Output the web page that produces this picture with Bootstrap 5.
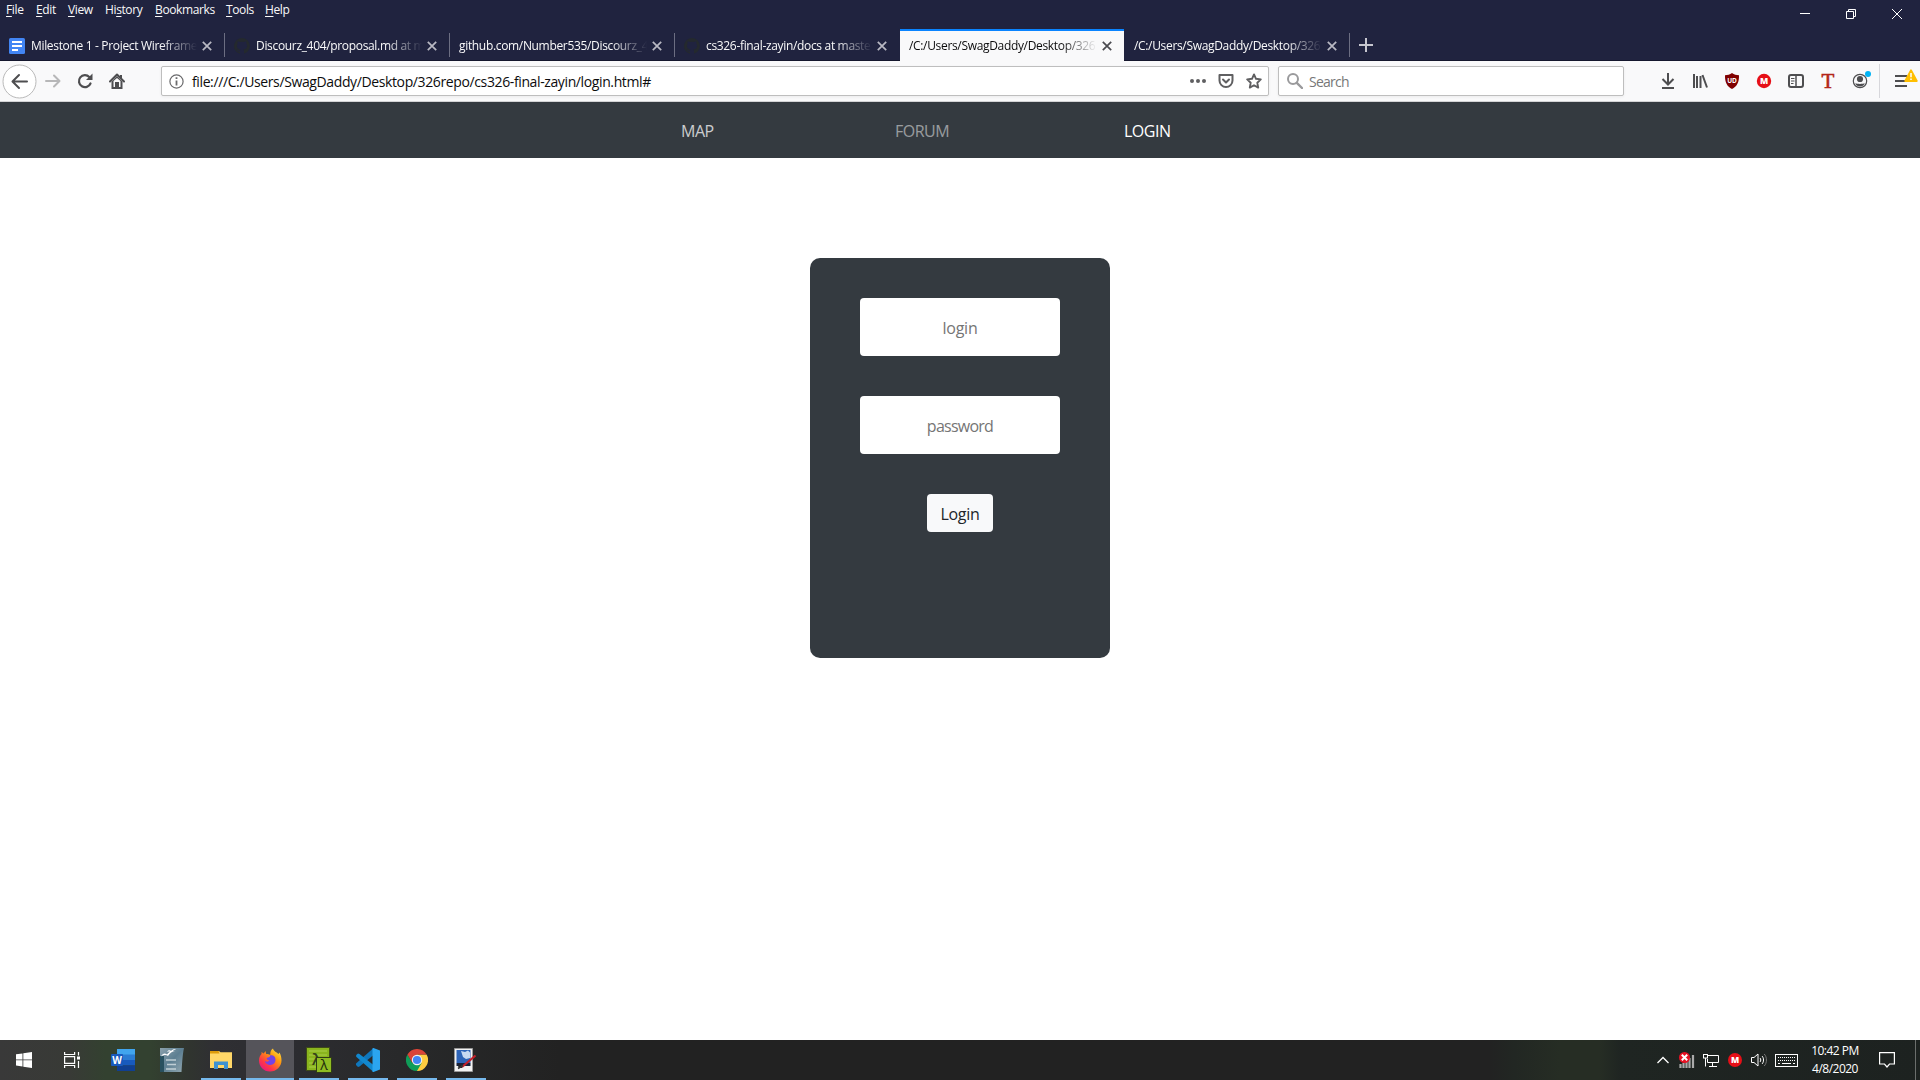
<!DOCTYPE html>
<html lang="en">
<head>
<meta charset="utf-8">
<meta name="viewport" content="width=device-width, initial-scale=1">
<title>Login</title>
<link href="https://cdn.jsdelivr.net/npm/bootstrap@5.3.0/dist/css/bootstrap.min.css" rel="stylesheet">
<style>
  html, body { height: 100%; }
  body { font-family: "Open Sans", "Noto Sans", sans-serif; font-size: 12px; line-height: 1; background: #fff; overflow: hidden; cursor: default; }
  svg { display: block; flex: none; }
  .titlebar { height: 61px; background: #20233f; color: #f9f9fa; border-bottom: 1px solid #15172e; }
  .menus { height: 20px; padding-left: 6px; font-size: 12px; letter-spacing: -.38px; }
  .menus span { white-space: nowrap; line-height: 20px; }
  .menus u { text-underline-offset: 2px; text-decoration-thickness: 1px; text-decoration-skip-ink: none; }
  .m-file { width: 30px; } .m-edit { width: 32px; } .m-view { width: 37px; } .m-hist { width: 50px; } .m-book { width: 71px; } .m-tool { width: 39px; }
  .winbtns svg { width: 46px; height: 28px; }
  .tabs { height: 32px; margin-top: 9px; }
  .btab { width: 225px; padding: 1px 13px 0 9px; position: relative; }
  .btab:not(.on, .before)::after { content: ""; position: absolute; right: 0; top: 4px; width: 1px; height: 24px; background: #6c6e82; }
  .btab.on { width: 224px; margin-right: 1px; padding-right: 12px; height: 32px; background: #f9f9fa; color: #0c0c0d; border-top: 2px solid #0a84ff; padding-top: 0; }
  .fav { width: 16px; height: 16px; margin-right: 6px; }
  .tlabel { flex: 1 1 0; min-width: 0; white-space: nowrap; line-height: 20px; margin-right: 5px; letter-spacing: -.33px;
    -webkit-mask-image: linear-gradient(to left, transparent 0, #000 36px); mask-image: linear-gradient(to left, transparent 0, #000 36px); }
  .toolbar { height: 41px; background: #f9f9fa; border-bottom: 1px solid #d3d3d5; padding-left: 2px; }
  .cell32 { width: 32px; display: flex; justify-content: center; flex: none; position: relative; }
  .field { height: 30px; background: #fff; border: 1px solid #bebebe; border-radius: 2px; box-shadow: 0 1px 3px rgba(0,0,0,.06); color: #0c0c0d; }
  .urlbox { width: 1108px; margin-left: 28px; font-size: 14px; padding: 0 6px 0 7px; }
  .urltext { letter-spacing: -.38px; margin-left: 8px; line-height: 28px; padding-top: 2px; white-space: nowrap; }
  .urlicons { gap: 12px; }
  .searchbox { width: 346px; margin-left: 9px; font-size: 14px; padding-left: 8px; color: #777; }
  .searchhint { margin-left: 6px; letter-spacing: -.75px; line-height: 28px; padding-top: 2px; }
  .vline { width: 1px; height: 34px; background: #d7d7db; margin-left: 3px; }
  .alertmark { position: absolute; right: 2px; top: -5px; }
  .sitenav { height: 56px; background: #343a40; font-size: 16px; padding-top: 2px; }
  .sitenav a { color: rgba(255,255,255,.5); text-decoration: none; white-space: nowrap; line-height: 24px; letter-spacing: -.5px; }
  .sitenav a.hov { color: rgba(255,255,255,.75); } .sitenav a.act { color: #fff; }
  .n-a { width: 214px; margin-left: 681px; } .n-b { width: 229px; }
  .page { height: 882px; padding-top: 100px; }
  .loginbox { width: 300px; height: 400px; background: #343a40; border-radius: 10px; padding-top: 40px; font-size: 16px; }
  .loginbox input { width: 200px; height: 58px; border: 0; border-radius: 4px; text-align: center; margin-bottom: 40px; padding: 2px 0 0; font-size: 16px; letter-spacing: -.25px; }
  .loginbox input[type=password] { letter-spacing: -.75px; }
  .loginbox input::placeholder { color: #757575; opacity: 1; }
  .loginbox .btn { width: 66px; height: 38px; border-radius: 4px; padding: 2px 0 0; border: 0; font-size: 16px; letter-spacing: -.3px; color: #212529; background: #f8f9fa; }
  .taskbar { height: 40px; color: #fff;
    background: linear-gradient(90deg, #393939 0, #383a36 70px, #334130 105px, #334130 150px, #30342f 190px, #2f2f33 215px, #2c2c30 300px, #28292a 400px, #222 560px, #222 1490px, #222723 1515px, #262d24 1560px, #262d24 1600px, #1f2522 1620px, #1d2220 1920px); }
  .app { width: 48px; height: 40px; margin-right: 1px; display: flex; align-items: center; justify-content: center; flex: none; }
  .app.run { background: linear-gradient(#76b9ed, #76b9ed) center bottom / 40px 2px no-repeat; }
  .app.cur { background: linear-gradient(#76b9ed, #76b9ed) center bottom / 48px 2px no-repeat #55545a; }
  .clock { width: 60px; text-align: center; line-height: 18px; letter-spacing: -.5px; margin-left: 7px; padding-bottom: 1px; }
  .desk { width: 5px; height: 40px; border-left: 1px solid #6b6e6c; margin-left: 20px; }
</style>
<script src="https://cdn.jsdelivr.net/npm/bootstrap@5.3.0/dist/js/bootstrap.bundle.min.js"></script>
</head>
<body class="d-flex flex-column">
<svg width="0" height="0" class="position-absolute">
  <symbol id="x" viewBox="0 0 10 10"><path d="M.8.8l8.4 8.4M9.2.8L.8 9.2" stroke="currentColor" stroke-width="1.7" fill="none"/></symbol>
  <symbol id="gh" viewBox="0 0 16 16"><path fill="#24292e" d="M8 0a8 8 0 0 0-2.5 15.6c.4.1.5-.2.5-.4v-1.5c-2.200.5-2.700-.9-2.700-.9-.4-.9-.9-1.200-.9-1.200-.7-.5.1-.5.1-.5.8.1 1.200.8 1.200.8.7 1.300 1.900.9 2.300.7.1-.5.3-.9.5-1.100-1.800-.2-3.600-.9-3.600-4 0-.9.3-1.600.8-2.100-.1-.2-.4-1 .1-2.100 0 0 .7-.2 2.200.8a7.500 7.500 0 0 1 4 0c1.500-1 2.200-.8 2.200-.8.4 1.100.2 1.900.1 2.100.5.600.8 1.300.8 2.100 0 3.100-1.900 3.700-3.700 3.900.3.300.600.8.600 1.500v2.200c0 .2.1.5.600.4A8 8 0 0 0 8 0z"/></symbol>
</svg>

<header class="titlebar flex-shrink-0">
  <div class="menus d-flex justify-content-between">
    <div class="d-flex">
      <span class="m-file"><u>F</u>ile</span><span class="m-edit"><u>E</u>dit</span><span class="m-view"><u>V</u>iew</span><span class="m-hist">Hi<u>s</u>tory</span><span class="m-book"><u>B</u>ookmarks</span><span class="m-tool"><u>T</u>ools</span><span><u>H</u>elp</span>
    </div>
    <div class="winbtns d-flex">
      <svg viewBox="0 0 46 28"><path d="M18 13.500h10" stroke="#fff"/></svg>
      <svg viewBox="0 0 46 28"><path d="M18.500 11.500h7v7h-7zM20.500 11V9.500h7v7H26" stroke="#fff" fill="none"/></svg>
      <svg viewBox="0 0 46 28"><path d="M18 9l10 10M28 9L18 19" stroke="#fff"/></svg>
    </div>
  </div>
  <div class="tabs d-flex align-items-center">
    <div class="btab h-100 d-flex align-items-center">
      <svg class="fav"><rect width="16" height="16" rx="1.500" fill="#4285f4"/><path d="M3 4h10M3 8h10M3 12h6" stroke="#fff" stroke-width="2"/></svg>
      <span class="tlabel">Milestone 1 - Project Wireframe</span><svg width="10" height="10" color="#b9b9c3"><use href="#x"/></svg>
    </div>
    <div class="btab h-100 d-flex align-items-center">
      <svg class="fav"><use href="#gh"/></svg>
      <span class="tlabel">Discourz_404/proposal.md at m</span><svg width="10" height="10" color="#b9b9c3"><use href="#x"/></svg>
    </div>
    <div class="btab h-100 d-flex align-items-center">
      <span class="tlabel">github.com/Number535/Discourz_4</span><svg width="10" height="10" color="#b9b9c3"><use href="#x"/></svg>
    </div>
    <div class="btab before h-100 d-flex align-items-center">
      <svg class="fav"><use href="#gh"/></svg>
      <span class="tlabel">cs326-final-zayin/docs at maste</span><svg width="10" height="10" color="#b9b9c3"><use href="#x"/></svg>
    </div>
    <div class="btab on d-flex align-items-center">
      <span class="tlabel">/C:/Users/SwagDaddy/Desktop/326</span><svg width="10" height="10" color="#4a4a4f"><use href="#x"/></svg>
    </div>
    <div class="btab h-100 d-flex align-items-center">
      <span class="tlabel">/C:/Users/SwagDaddy/Desktop/326</span><svg width="10" height="10" color="#b9b9c3"><use href="#x"/></svg>
    </div>
    <svg class="ms-2" width="16" height="16"><path d="M8 1v14M1 8h14" stroke="#c6c6cf" stroke-width="2"/></svg>
  </div>
</header>

<div class="toolbar d-flex align-items-center flex-shrink-0">
  <svg width="35" height="35"><circle cx="17.500" cy="17.500" r="16.500" fill="#fff" stroke="#b9b9b9"/><path d="M25 17.500H11M17 11l-6.500 6.500L17 24" fill="none" stroke="#4e4e50" stroke-width="2" stroke-linecap="round" stroke-linejoin="round"/></svg>
  <div class="cell32"><svg width="16" height="16"><path d="M1 8h13M9 2.500L14.500 8 9 13.500" fill="none" stroke="#b7b7b8" stroke-width="2" stroke-linecap="round" stroke-linejoin="round"/></svg></div>
  <div class="cell32"><svg width="16" height="16"><path d="M13.500 10.500A6 6 0 1 1 12.300 4" fill="none" stroke="#4e4e50" stroke-width="2.200" stroke-linecap="round"/><path d="M15.500.5v6.500H9z" fill="#4e4e50"/></svg></div>
  <div class="cell32"><svg width="16" height="16"><path d="M1 8.500l7-7 7 7" fill="none" stroke="#4e4e50" stroke-width="2" stroke-linecap="round" stroke-linejoin="round"/><path fill="#4e4e50" fill-rule="evenodd" d="M2.500 8.500L8 3l5.500 5.500V16h-11zM4.500 8v6H6v-5h4v5h1.500V8L8 5z"/><path d="M7.300 9.500h1.600V14H7.300zM11 2h2v3h-2z" fill="#4e4e50"/></svg></div>
  <div class="field urlbox d-flex align-items-center">
    <svg width="15" height="15"><circle cx="7.500" cy="7.500" r="6.600" fill="none" stroke="#6a6a6c" stroke-width="1.200"/><path d="M7.500 3.300v1.800M7.500 6.500v5" stroke="#6a6a6c" stroke-width="1.800"/></svg>
    <span class="urltext">file:///C:/Users/SwagDaddy/Desktop/326repo/cs326-final-zayin/login.html#</span>
    <div class="urlicons ms-auto d-flex align-items-center">
      <svg width="16" height="16" fill="#5f5f61"><circle cx="2" cy="8" r="2"/><circle cx="8" cy="8" r="2"/><circle cx="14" cy="8" r="2"/></svg>
      <svg width="16" height="16" fill="none" stroke="#5f5f61" stroke-width="2" stroke-linecap="round" stroke-linejoin="round"><path d="M1.500 2h13v5.500a6.500 6.500 0 0 1-13 0z"/><path d="M5 6.500l3 3 3-3"/></svg>
      <svg width="16" height="16" fill="none" stroke="#5f5f61" stroke-width="1.900" stroke-linejoin="round"><path d="M8 1.400l2 4.400 4.800.6-3.500 3.300.9 4.900L8 12.200l-4.200 2.400.9-4.900L1.200 6.400 6 5.800z"/></svg>
    </div>
  </div>
  <div class="field searchbox d-flex align-items-center">
    <svg width="16" height="16" fill="none" stroke="#9a9a9c" stroke-width="2"><circle cx="6" cy="6" r="5"/><path d="M9.800 9.800L15 15" stroke-width="2.400" stroke-linecap="round"/></svg>
    <span class="searchhint">Search</span>
  </div>
  <div class="d-flex align-items-center ms-auto flex-shrink-0">
    <div class="cell32"><svg width="16" height="16" fill="none" stroke="#4e4e50" stroke-width="2"><path d="M8 0v11M2.500 6L8 11.500 13.500 6" /><path d="M2 15h12"/></svg></div>
    <div class="cell32"><svg width="16" height="16" fill="none" stroke="#4e4e50" stroke-width="2"><path d="M2 1v14M5 3v12M8.500 3v12M10.500 2l4.500 12.500"/></svg></div>
    <div class="cell32"><svg width="16" height="16"><path d="M8 0c2 1.500 4.500 2.200 7 2.200C15.200 9 13 13.500 8 16 3 13.500.8 9 1 2.200 3.500 2.200 6 1.500 8 0z" fill="#800000"/><text x="8" y="9.800" text-anchor="middle" font-size="6.500" font-weight="700" fill="#fff">UD</text></svg></div>
    <div class="cell32"><svg width="16" height="16"><circle cx="8" cy="8" r="7.200" fill="#e60f17"/><text x="8" y="11" text-anchor="middle" font-size="8.500" font-weight="800" fill="#fff">M</text></svg></div>
    <div class="cell32"><svg width="16" height="16" fill="none" stroke="#4e4e50"><rect x="1" y="2" width="14" height="12" rx="2" stroke-width="2"/><path d="M8 2v12" stroke-width="1.500"/><path d="M3 5.500h3.500M3 8h3.500M3 10.500h2.500"/></svg></div>
    <div class="cell32"><svg width="16" height="16"><text x="8" y="15" text-anchor="middle" font-family="Liberation Serif" font-size="21" fill="#b3261a" stroke="#b3261a" stroke-width=".6">T</text></svg></div>
    <div class="cell32"><svg width="16" height="16"><circle cx="8" cy="8" r="6.700" fill="none" stroke="#4e4e50" stroke-width="1.200"/><circle cx="8" cy="6" r="3.100" fill="#4e4e50"/><path d="M3.200 10.300c2 .8 7.600.8 9.600 0C12 12.600 10 13.600 8 13.600s-4-1-4.800-3.300z" fill="#4e4e50"/></svg><svg width="6" height="6" class="position-absolute" style="right:5px;top:-2px"><circle cx="3" cy="3" r="3" fill="#00b3f4"/></svg></div>
    <div class="vline"></div>
    <div class="position-relative ps-3 pe-2" style="width:40px"><svg width="12" height="14" style="margin-left:-1px"><path d="M0 2h12M0 7h12M0 12h12" stroke="#4e4e50" stroke-width="2"/></svg>
      <svg class="alertmark" width="14" height="13"><path d="M7 1.200L12.800 12H1.200z" fill="#ffbf00" stroke="#ffbf00" stroke-width="1.800" stroke-linejoin="round"/><path d="M7 4v4.200M7 9.500v1.600" stroke="#fff" stroke-width="1.500"/></svg></div>
  </div>
</div>

<nav class="sitenav d-flex align-items-center flex-shrink-0">
  <div class="n-a"><a class="hov" href="#">MAP</a></div><div class="n-b"><a href="#">FORUM</a></div><div><a class="act" href="#">LOGIN</a></div>
</nav>

<main class="page flex-shrink-0">
  <form class="loginbox mx-auto d-flex flex-column align-items-center">
    <input type="text" placeholder="login"><input type="password" placeholder="password">
    <button type="button" class="btn btn-light">Login</button>
  </form>
</main>

<footer class="taskbar d-flex align-items-center flex-shrink-0">
  <div class="app"><svg width="16" height="16" fill="#fff"><path d="M0 2.300l6.500-.9v6.100H0zM7.300 1.300L16 0v7.500H7.300zM0 8.300h6.500v6.200L0 13.600zM7.300 8.300H16V16l-8.700-1.300z"/></svg></div>
  <div class="app" style="margin-right:2px"><svg width="16" height="16" fill="none" stroke="#fff" stroke-width="1.200" style="margin-right:2px"><path d="M.6 0v2.500h10V0M.6 16v-2.500h10V16M.6 4.600h10v6.800H.6zM14.500 0v3.500M14.500 9v7"/><path d="M13 4.500h3v3h-3z" fill="#fff" stroke="none"/></svg></div>
  <div class="app"><svg width="24" height="22"><path d="M6 0h18v6H6z" fill="#41a5ee"/><path d="M6 5.500h18V11H6z" fill="#2b7cd3"/><path d="M6 11h18v5.500H6z" fill="#185abd"/><path d="M6 16.500h18V22H6z" fill="#103f91"/><rect y="5" width="12" height="12" rx="1" fill="#185abd"/><text x="6" y="14.500" text-anchor="middle" font-size="10" font-weight="700" fill="#fff">W</text></svg></div>
  <div class="app"><svg width="24" height="24"><defs><linearGradient id="oo" x2="1" y2="1"><stop stop-color="#8ba0ac"/><stop offset=".5" stop-color="#5d7f92"/><stop offset="1" stop-color="#93a8b1"/></linearGradient></defs><path d="M0 0h24c-1.500 6-2 18-2.500 24H0z" fill="url(#oo)"/><path d="M0 8h4v16H0z" fill="#28505f"/><path d="M1 8.500c2-3.500 4-3.500 6-2 2-3 5-4 8-3.500-3 .5-5 2-7 5-2-1.500-4-1.500-7 .5zM7 4c1-2 3-2 4-1 1.500-1.500 3-2 5-1.500-2 .3-3.500 1.500-4.500 3C10 3.500 9 3.300 7 4z" fill="#fff"/><path d="M6 12h10M7 16.500h9M6 21h10" stroke="#cfdbe0" stroke-width="1.500" opacity=".85"/></svg></div>
  <div class="app run"><svg width="22" height="18"><path d="M0 0h9l1.500 1.200H22V17H0z" fill="#ffd768"/><path d="M0 0h8.500l1 2.500H0z" fill="#dd9b0a"/><path d="M4 10.500h14V18h-4v-4H8v4H4z" fill="#3e92d2"/></svg></div>
  <div class="app cur"><svg width="24" height="24"><defs><linearGradient id="ff" x1="1" x2=".2" y2="1"><stop stop-color="#fff44f"/><stop offset=".4" stop-color="#ff980e"/><stop offset=".75" stop-color="#ff3647"/><stop offset="1" stop-color="#e31587"/></linearGradient></defs><path d="M12 23.500C5.500 23.500 1 18.500 1 12.500c0-3 1-5 2.500-6.500V4l2.200 1.500L7.500 3l.7 3c2 0 2.800.3 4 1 0-3 .8-5.500 2.800-6.500.5 2.500 4 4 5.500 5.500l1-1.500c1.500 3 2 5 2 8 0 6-5 11-11.500 11z" fill="url(#ff)"/><path d="M12.500 7c4 .2 5 2.500 5 5a5 5 0 0 1-5 5c-3 0-5.500-1.700-5.500-4 1.500 1 3.500.8 4.500-.5-1.500-.2-3-1.200-2.800-2.500L11.500 9z" fill="#7542e5"/></svg></div>
  <div class="app run"><svg width="26" height="26"><rect x=".5" y=".5" width="23" height="23" fill="#8ab51e" stroke="#3e4a18"/><path d="M3 4h18M3 8h18M3 12h18M3 16h8M3 20h8" stroke="#a9cf49" stroke-width="1.200"/><text x="11" y="18" text-anchor="middle" font-size="17" font-weight="600" fill="#35431a">λ</text><rect x="10.500" y="10.500" width="15" height="15" fill="#8fbc22" stroke="#303c16"/><text x="18" y="23" text-anchor="middle" font-size="14" fill="#1d280c">λ</text></svg></div>
  <div class="app run"><svg width="24" height="24"><path d="M17.500 0v7L3.500 18.500 2 19l-2-2v-1.500z" fill="#0f77bd"/><path d="M17.500 24v-7L3.500 6 2 5.500.2 7v1.700z" fill="#1288cf"/><path d="M17.500 0L24 2.500v19L17.500 24c-.8.2-1-.2-1-.5V.8c0-.5.400-.9 1-.8z" fill="#2ba5f0"/></svg></div>
  <div class="app run"><svg width="22" height="22" viewBox="0 0 22 22"><path d="M11 11l0-5.500h9.530A11 11 0 0 1 11 22z" fill="#ffcd40"/><path d="M1.470 5.500L6.200 13.700 11 16 15.760 13.750 11 22A11 11 0 0 1 1.470 5.500z" fill="#0f9d58"/><path d="M1.470 5.500A11 11 0 0 1 20.530 5.500H11L6.200 13.700z" fill="#db4437"/><circle cx="11" cy="11" r="5.200" fill="#f1f1f1"/><circle cx="11" cy="11" r="4.100" fill="#4285f4"/></svg></div>
  <div class="app run"><svg width="24" height="24" style="margin-right:2px"><path d="M1.500.5h18v23h-18z" fill="#f2f2f2" stroke="#999"/><path d="M3.500 2h14v13h-14z" fill="#2d64b8"/><path d="M8 3l4 1 3-1.500 2 2V10l-4 1-3-2z" fill="#c8daf2"/><path d="M3.500 15h14v3h-14z" fill="#18223c"/><path d="M5 18c2-2 3-1 5 0l-1 2H6z" fill="#222"/><path d="M9 19L22.500 7.500" stroke="#c3202a" stroke-width="2.200"/><path d="M5 20.500l5-3" stroke="#333" stroke-width="1.500"/></svg></div>

  <div class="ms-auto d-flex align-items-center">
    <svg width="12" height="8"><path d="M.5 7L6 1.500 11.500 7" fill="none" stroke="#fff" stroke-width="1.300"/></svg>
    <svg width="17" height="17" style="margin-left:10px"><path d="M1.500 12v4M4.500 11v5M7.500 9v7M10.500 6v10M14 3v13" stroke="#aaa" stroke-width="2.200"/><circle cx="5.500" cy="5.500" r="5.500" fill="#e81123"/><path d="M2.800 2.800l5.400 5.400M8.200 2.800L2.800 8.200" stroke="#fff" stroke-width="2"/></svg>
    <svg width="16" height="14" style="margin-left:7px" fill="none" stroke="#fff"><path d="M4.500 2.500h11v7h-11V6M9.500 10v3M6 13.500h8M2.500 5v8.500"/><rect x=".5" y="1.500" width="4" height="3.500"/></svg>
    <svg width="14" height="14" style="margin-left:9px"><circle cx="7" cy="7" r="7" fill="#e60f17"/><text x="7" y="10" text-anchor="middle" font-size="8.500" font-weight="800" fill="#fff">M</text></svg>
    <svg width="16" height="14" style="margin-left:9px" fill="none" stroke="#fff"><path d="M.5 4.500h2.500L7 1v12L3 9.500H.5z"/><path d="M9 5c1 1 1 3 0 4M11 3c2 2 2 6 0 8"/><path d="M13.200 1c3 3 3 9 0 12" stroke="#777"/></svg>
    <svg width="23" height="13" style="margin-left:8px" fill="none" stroke="#fff"><rect x=".5" y=".5" width="22" height="12"/><path d="M3 3.500h17M3 6.500h17" stroke-dasharray="1 1"/><path d="M3 9.500h2M7 9.500h9M18 9.500h2"/></svg>
    <div class="clock"><div>10:42 PM</div><div>4/8/2020</div></div>
    <svg width="16" height="17" style="margin:1px 0 0 14px"><path d="M.6.600h14.800v11.400H10.500l-2.500 3-2.500-3H.6z" fill="none" stroke="#fff" stroke-width="1.200"/></svg>
    <div class="desk"></div>
  </div>
</footer>
</body>
</html>
